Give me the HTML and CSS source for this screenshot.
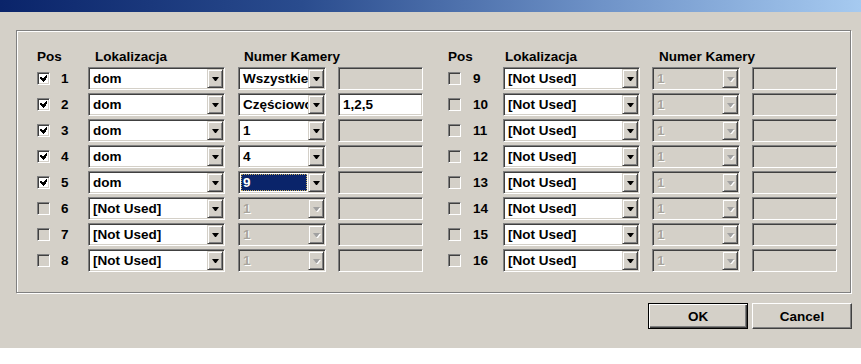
FILE: index.html
```html
<!DOCTYPE html>
<html>
<head>
<meta charset="utf-8">
<link rel="stylesheet" href="styles.css">
</head>
<body>
<div class="titlebar"></div>
<div class="dialog">
  <div class="group">
    <div class="panel left">
      <div class="hdr pos">Pos</div>
      <div class="hdr lok">Lokalizacja</div>
      <div class="hdr num">Numer Kamery</div>

      <span class="cb on"><svg width="7" height="7" viewBox="0 0 7 7" shape-rendering="crispEdges"><path d="M6 0h1v3h-1zM5 1h1v4h-1zM4 2h1v4h-1zM3 3h1v4h-1zM2 3h1v3h-1zM1 2h1v3h-1zM0 2h1v2h-1z"/></svg></span>
      <span class="no">1</span>
      <div class="combo c1"><span class="val">dom</span><span class="btn"><i></i></span></div>
      <div class="combo c2"><span class="val">Wszystkie</span><span class="btn"><i></i></span></div>
      <div class="field off"></div>

      <span class="cb on"><svg width="7" height="7" viewBox="0 0 7 7" shape-rendering="crispEdges"><path d="M6 0h1v3h-1zM5 1h1v4h-1zM4 2h1v4h-1zM3 3h1v4h-1zM2 3h1v3h-1zM1 2h1v3h-1zM0 2h1v2h-1z"/></svg></span>
      <span class="no">2</span>
      <div class="combo c1"><span class="val">dom</span><span class="btn"><i></i></span></div>
      <div class="combo c2"><span class="val">Częściowo</span><span class="btn"><i></i></span></div>
      <div class="field"><span class="val">1,2,5</span></div>

      <span class="cb on"><svg width="7" height="7" viewBox="0 0 7 7" shape-rendering="crispEdges"><path d="M6 0h1v3h-1zM5 1h1v4h-1zM4 2h1v4h-1zM3 3h1v4h-1zM2 3h1v3h-1zM1 2h1v3h-1zM0 2h1v2h-1z"/></svg></span>
      <span class="no">3</span>
      <div class="combo c1"><span class="val">dom</span><span class="btn"><i></i></span></div>
      <div class="combo c2"><span class="val">1</span><span class="btn"><i></i></span></div>
      <div class="field off"></div>

      <span class="cb on"><svg width="7" height="7" viewBox="0 0 7 7" shape-rendering="crispEdges"><path d="M6 0h1v3h-1zM5 1h1v4h-1zM4 2h1v4h-1zM3 3h1v4h-1zM2 3h1v3h-1zM1 2h1v3h-1zM0 2h1v2h-1z"/></svg></span>
      <span class="no">4</span>
      <div class="combo c1"><span class="val">dom</span><span class="btn"><i></i></span></div>
      <div class="combo c2"><span class="val">4</span><span class="btn"><i></i></span></div>
      <div class="field off"></div>

      <span class="cb on"><svg width="7" height="7" viewBox="0 0 7 7" shape-rendering="crispEdges"><path d="M6 0h1v3h-1zM5 1h1v4h-1zM4 2h1v4h-1zM3 3h1v4h-1zM2 3h1v3h-1zM1 2h1v3h-1zM0 2h1v2h-1z"/></svg></span>
      <span class="no">5</span>
      <div class="combo c1"><span class="val">dom</span><span class="btn"><i></i></span></div>
      <div class="combo c2"><span class="val sel"><b>9</b></span><span class="btn"><i></i></span></div>
      <div class="field off"></div>

      <span class="cb"></span>
      <span class="no">6</span>
      <div class="combo c1"><span class="val">[Not Used]</span><span class="btn"><i></i></span></div>
      <div class="combo c2 dis"><span class="val">1</span><span class="btn"><i></i></span></div>
      <div class="field off"></div>

      <span class="cb"></span>
      <span class="no">7</span>
      <div class="combo c1"><span class="val">[Not Used]</span><span class="btn"><i></i></span></div>
      <div class="combo c2 dis"><span class="val">1</span><span class="btn"><i></i></span></div>
      <div class="field off"></div>

      <span class="cb"></span>
      <span class="no">8</span>
      <div class="combo c1"><span class="val">[Not Used]</span><span class="btn"><i></i></span></div>
      <div class="combo c2 dis"><span class="val">1</span><span class="btn"><i></i></span></div>
      <div class="field off"></div>
    </div>

    <div class="panel right">
      <div class="hdr pos">Pos</div>
      <div class="hdr lok">Lokalizacja</div>
      <div class="hdr num">Numer Kamery</div>

      <span class="cb"></span><span class="no">9</span>
      <div class="combo c1"><span class="val">[Not Used]</span><span class="btn"><i></i></span></div>
      <div class="combo c2 dis"><span class="val">1</span><span class="btn"><i></i></span></div>
      <div class="field off"></div>

      <span class="cb"></span><span class="no">10</span>
      <div class="combo c1"><span class="val">[Not Used]</span><span class="btn"><i></i></span></div>
      <div class="combo c2 dis"><span class="val">1</span><span class="btn"><i></i></span></div>
      <div class="field off"></div>

      <span class="cb"></span><span class="no">11</span>
      <div class="combo c1"><span class="val">[Not Used]</span><span class="btn"><i></i></span></div>
      <div class="combo c2 dis"><span class="val">1</span><span class="btn"><i></i></span></div>
      <div class="field off"></div>

      <span class="cb"></span><span class="no">12</span>
      <div class="combo c1"><span class="val">[Not Used]</span><span class="btn"><i></i></span></div>
      <div class="combo c2 dis"><span class="val">1</span><span class="btn"><i></i></span></div>
      <div class="field off"></div>

      <span class="cb"></span><span class="no">13</span>
      <div class="combo c1"><span class="val">[Not Used]</span><span class="btn"><i></i></span></div>
      <div class="combo c2 dis"><span class="val">1</span><span class="btn"><i></i></span></div>
      <div class="field off"></div>

      <span class="cb"></span><span class="no">14</span>
      <div class="combo c1"><span class="val">[Not Used]</span><span class="btn"><i></i></span></div>
      <div class="combo c2 dis"><span class="val">1</span><span class="btn"><i></i></span></div>
      <div class="field off"></div>

      <span class="cb"></span><span class="no">15</span>
      <div class="combo c1"><span class="val">[Not Used]</span><span class="btn"><i></i></span></div>
      <div class="combo c2 dis"><span class="val">1</span><span class="btn"><i></i></span></div>
      <div class="field off"></div>

      <span class="cb"></span><span class="no">16</span>
      <div class="combo c1"><span class="val">[Not Used]</span><span class="btn"><i></i></span></div>
      <div class="combo c2 dis"><span class="val">1</span><span class="btn"><i></i></span></div>
      <div class="field off"></div>
    </div>
  </div>
  <div class="buttons">
    <button class="pbtn default">OK</button>
    <button class="pbtn">Cancel</button>
  </div>
</div>
</body>
</html>
```

FILE: styles.css
```css
html, body {
  margin: 0;
  padding: 0;
  background: #ffffff;
}
body {
  width: 861px;
  height: 364px;
  overflow: hidden;
  font-family: "Liberation Sans", Arial, sans-serif;
  font-weight: bold;
  font-size: 13.5px;
  color: #000;
}
.titlebar {
  height: 12px;
  background: linear-gradient(to right, #0a246a 0%, #2a4c8e 35%, #6f93c8 70%, #a6caf0 100%);
}
.dialog {
  height: 336px;
  background: #d4d0c8;
  box-sizing: border-box;
  padding-top: 18px;
  display: flex;
  flex-direction: column;
}
.group {
  margin-left: 16px;
  width: 835px;
  height: 263px;
  box-sizing: border-box;
  border: 1px solid #808080;
  box-shadow: inset 1px 1px 0 #fff, 1px 1px 0 #fff;
  padding: 18px 0 0 20px;
  display: flex;
  gap: 25px;
}
.panel {
  display: grid;
  grid-template-rows: 15px repeat(8, 23px);
  row-gap: 3px;
  align-items: center;
}
.panel.left {
  grid-template-columns: 24px 27px 150px 100px 85px;
}
.panel.right {
  grid-template-columns: 25px 30px 149px 100px 85px;
}
.hdr {
  line-height: 15px;
  white-space: nowrap;
}
.hdr.pos { grid-column: 1 / 3; }
.hdr.lok { grid-column: 3; }
.hdr.num { grid-column: 4 / 6; }
.left .hdr.lok { padding-left: 7px; }
.right .hdr.lok { padding-left: 2px; }
.left .hdr.num { padding-left: 6px; }
.right .hdr.num { padding-left: 7px; }

.cb {
  width: 13px;
  height: 13px;
  box-sizing: border-box;
  border: 1px solid;
  border-color: #808080 #fff #fff #808080;
  box-shadow: inset 1px 1px 0 #404040, inset -1px -1px 0 #d4d0c8;
  background: #d4d0c8;
  display: flex;
  align-items: center;
  justify-content: center;
}
.cb.on { background: #fff; }
.cb svg { display: block; }

.no {
  line-height: 23px;
}

.combo, .field {
  height: 23px;
  box-sizing: border-box;
  border: 1px solid;
  border-color: #808080 #fff #fff #808080;
  box-shadow: inset 1px 1px 0 #404040, inset -1px -1px 0 #d4d0c8;
  padding: 1px;
  background: #fff;
  display: flex;
}
.combo.c1 { width: 137px; }
.combo.c2 { width: 88px; }
.field { width: 85px; }
.field.off, .combo.dis { background: #d4d0c8; }

.val {
  flex: 1;
  min-width: 0;
  overflow: hidden;
  white-space: nowrap;
  padding-left: 3px;
  line-height: 19px;
}
.val.sel {
  padding: 1px;
  display: flex;
}
.val.sel b {
  flex: 1;
  background: #0a246a;
  color: #fff;
  outline: 1px dotted #c8b060;
  outline-offset: -1px;
  padding-left: 2px;
  line-height: 17px;
}
.dis .val {
  color: #a8a59c;
  text-shadow: 1px 1px 0 #fff;
}

.btn {
  width: 16px;
  height: 19px;
  box-sizing: border-box;
  border: 1px solid;
  border-color: #d4d0c8 #404040 #404040 #d4d0c8;
  box-shadow: inset 1px 1px 0 #fff, inset -1px -1px 0 #808080;
  background: #d4d0c8;
  display: flex;
  align-items: center;
  justify-content: center;
}
.btn i {
  display: block;
  width: 1px;
  height: 0;
  border-left: 3px solid transparent;
  border-right: 3px solid transparent;
  border-top: 4px solid #000;
}
.dis .btn i {
  border-top-color: #a0a0a0;
  filter: drop-shadow(1px 1px 0 #fff);
}

.buttons {
  margin-top: 10px;
  display: flex;
  justify-content: flex-end;
  gap: 4px;
  padding-right: 9px;
}
.pbtn {
  width: 100px;
  height: 26px;
  box-sizing: border-box;
  margin: 0;
  padding: 0;
  font: inherit;
  color: #000;
  background: #d4d0c8;
  border: 1px solid;
  border-color: #fff #404040 #404040 #fff;
  box-shadow: inset -1px -1px 0 #808080;
}
.pbtn.default {
  border: 1px solid #000;
  box-shadow: inset 1px 1px 0 #fff, inset -1px -1px 0 #404040, inset -2px -2px 0 #808080;
}
```
